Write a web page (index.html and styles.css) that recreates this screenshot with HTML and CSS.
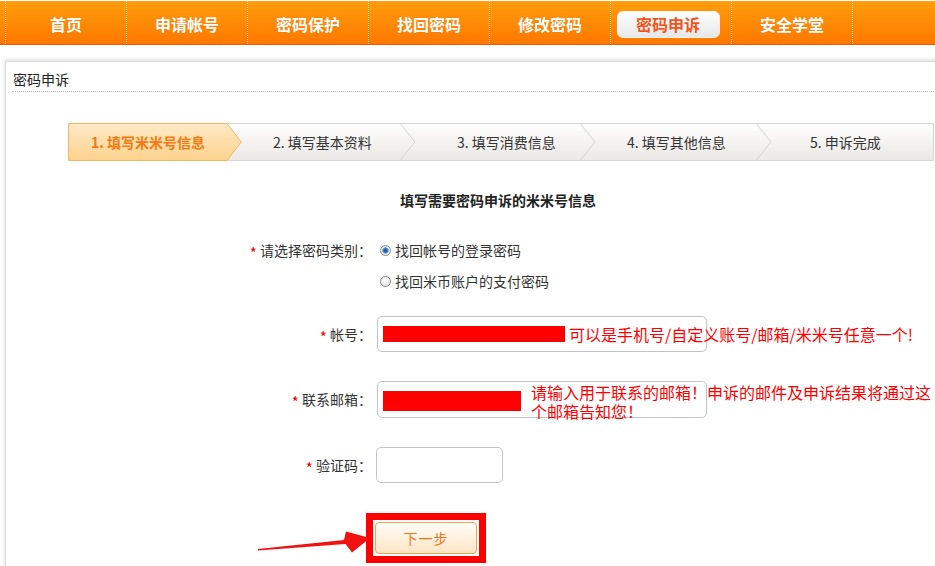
FILE: index.html
```
<!DOCTYPE html>
<html lang="zh-CN">
<head>
<meta charset="utf-8">
<title>密码申诉</title>
<link rel="stylesheet" href="styles.css">
</head>
<body>
<div class="page">
  <nav class="nav">
    <a class="nav-item" href="#">首页</a>
    <a class="nav-item" href="#">申请帐号</a>
    <a class="nav-item" href="#">密码保护</a>
    <a class="nav-item" href="#">找回密码</a>
    <a class="nav-item" href="#">修改密码</a>
    <a class="nav-item active" href="#"><span class="pill">密码申诉</span></a>
    <a class="nav-item last" href="#">安全学堂</a>
  </nav>

  <div class="panel">
    <div class="panel-title">密码申诉</div>

    <div class="steps">
      <div class="step step-1">1. 填写米米号信息</div>
      <svg class="sep-active" width="15" height="38" viewBox="0 0 15 38">
        <defs>
          <linearGradient id="og" x1="0" y1="0" x2="0" y2="1">
            <stop offset="0" stop-color="#fee9c6"/>
            <stop offset="1" stop-color="#fdd38e"/>
          </linearGradient>
        </defs>
        <polygon points="0,0 14.5,19 0,38" fill="url(#og)"/>
        <polyline points="0,0.5 14.3,19 0,37.5" fill="none" stroke="#f1b766" stroke-width="1"/>
      </svg>
      <div class="step step-2">2. 填写基本资料</div>
      <svg class="sep" width="16" height="36" viewBox="0 0 16 36">
        <polyline points="0.5,0 15,18 0.5,36" fill="none" stroke="#d3d3d3" stroke-width="1"/>
      </svg>
      <div class="step step-3">3. 填写消费信息</div>
      <svg class="sep" width="16" height="36" viewBox="0 0 16 36">
        <polyline points="0.5,0 15,18 0.5,36" fill="none" stroke="#d3d3d3" stroke-width="1"/>
      </svg>
      <div class="step step-4">4. 填写其他信息</div>
      <svg class="sep" width="16" height="36" viewBox="0 0 16 36">
        <polyline points="0.5,0 15,18 0.5,36" fill="none" stroke="#d3d3d3" stroke-width="1"/>
      </svg>
      <div class="step step-5">5. 申诉完成</div>
    </div>

    <h2 class="form-title">填写需要密码申诉的米米号信息</h2>

    <div class="form">
      <div class="row row-type">
        <div class="label"><span class="req">*</span> 请选择密码类别：</div>
        <div class="control">
          <label class="opt"><input type="radio" name="t" checked><span>找回帐号的登录密码</span></label>
        </div>
      </div>
      <div class="row row-type2">
        <div class="label"></div>
        <div class="control">
          <label class="opt"><input type="radio" name="t"><span>找回米币账户的支付密码</span></label>
        </div>
      </div>

      <div class="row row-account">
        <div class="label lh36"><span class="req">*</span> 帐号：</div>
        <div class="control">
          <div class="field field-wide"><span class="redact redact-account"></span></div>
          <span class="hint hint-account">可以是手机号/自定义账号/邮箱/米米号任意一个!</span>
        </div>
      </div>

      <div class="row row-email">
        <div class="label lh37"><span class="req">*</span> 联系邮箱：</div>
        <div class="control">
          <div class="field field-wide field-37"><span class="redact redact-email"></span></div>
          <span class="hint hint-email">请输入用于联系的邮箱！申诉的邮件及申诉结果将通过这个邮箱告知您！</span>
        </div>
      </div>

      <div class="row row-code">
        <div class="label lh36"><span class="req">*</span> 验证码：</div>
        <div class="control">
          <div class="field field-code"></div>
        </div>
      </div>

      <div class="row row-submit">
        <div class="label"></div>
        <div class="control">
          <div class="highlight"><button class="btn" type="button">下一步</button></div>
        </div>
      </div>
    </div>
  </div>

  <svg class="arrow" width="120" height="28" viewBox="0 0 120 28">
    <polygon points="3,21 89,12 91,3.5 115,10 97,24.5 90.5,16 3,22.6" fill="#f21010"/>
  </svg>
</div>
</body>
</html>
```

FILE: styles.css
```
html, body {
  margin: 0;
  padding: 0;
  overflow: hidden;
  background: #fff;
  font-family: "Noto Sans CJK SC", "Noto Sans", "Liberation Sans", sans-serif;
}

.page {
  position: relative;
  width: 935px;
  height: 566px;
  overflow: hidden;
}

/* ---------- top navigation ---------- */
.nav {
  display: flex;
  margin-top: 1px;
  height: 43px;
  padding-left: 5px;
  border-bottom: 1px solid #e25c00;
  background: linear-gradient(#ff9d0c, #ff7800);
}

.nav-item {
  width: 121px;
  flex: none;
  box-sizing: border-box;
  border-left: 1px dotted rgba(255, 255, 255, 0.6);
  display: flex;
  align-items: center;
  justify-content: center;
  padding-top: 3px;
  color: #fff;
  font-size: 16px;
  font-weight: bold;
  text-decoration: none;
  text-shadow: 0 0 1px rgba(190, 70, 0, 0.35);
}

.nav-item.last {
  width: 122px;
  border-right: 1px dotted rgba(255, 255, 255, 0.6);
}

.pill {
  width: 103px;
  height: 27px;
  box-sizing: border-box;
  display: flex;
  align-items: center;
  justify-content: center;
  margin-left: -6px;
  border-radius: 6px;
  border: 1px solid #f4f4f4;
  background: linear-gradient(#ffffff, #e7e7e7);
  color: #f0561c;
  text-shadow: none;
}

/* ---------- panel ---------- */
.panel {
  margin: 16px 0 0 5px;
  width: 940px;
  height: 600px;
  border: 1px solid #dddddd;
  box-shadow: 0 -1px 4px rgba(0, 0, 0, 0.16);
  background: #fff;
}

.panel-title {
  margin-left: 6px;
  padding: 7px 0 2px 1px;
  line-height: 20px;
  font-size: 14px;
  color: #222;
  border-bottom: 1px dotted #b8b8b8;
}

/* ---------- steps ---------- */
.steps {
  display: flex;
  margin: 31px 0 0 62px;
  width: 866px;
  height: 38px;
  box-sizing: border-box;
  border: 1px solid #d6d6d6;
  border-left: none;
  background: linear-gradient(#fefefe, #ebe8e5);
}

.step {
  flex: none;
  height: 36px;
  line-height: 36px;
  box-sizing: border-box;
  font-size: 14px;
  color: #333;
  white-space: nowrap;
}

.step-1 {
  width: 159px;
  height: 38px;
  margin: -1px 0;
  padding-left: 22px;
  border: 1px solid #f1b766;
  border-right: none;
  border-radius: 3px 0 0 3px;
  background: linear-gradient(#fee9c6, #fdd38e);
  color: #f47a10;
  font-weight: bold;
}

.sep-active {
  display: block;
  flex: none;
  margin: -1px 0;
}

.sep {
  display: block;
  flex: none;
}

.step-2 { width: 158px; padding-left: 31px; }
.step-3 { width: 164px; padding-left: 41px; }
.step-4 { width: 160px; padding-left: 31px; }
.step-5 { flex: 1; padding-left: 38px; }

/* ---------- form ---------- */
.form-title {
  margin: 29px 0 0 0;
  padding-left: 394px;
  line-height: 20px;
  font-size: 14px;
  font-weight: bold;
  color: #222;
}

.row {
  display: flex;
  align-items: flex-start;
}

.label {
  width: 366px;
  flex: none;
  text-align: right;
  font-size: 14px;
  line-height: 20px;
  color: #333;
  white-space: nowrap;
}

.lh36 { line-height: 36px; height: 36px; }
.lh37 { line-height: 37px; height: 37px; }

.req {
  color: #e60000;
  font-size: 15px;
  line-height: 0;
  vertical-align: -3px;
}

.control {
  margin-left: 5px;
  display: flex;
  align-items: flex-start;
}

.row-type { margin-top: 30px; }
.row-type2 { margin-top: 11px; }
.row-account { margin-top: 25px; }
.row-email { margin-top: 29px; }
.row-code { margin-top: 26px; }
.row-submit { margin-top: 30px; }

.row-type .label { height: 20px; }

.opt {
  display: flex;
  align-items: center;
  line-height: 20px;
  font-size: 14px;
  color: #333;
}

.opt input {
  -webkit-appearance: none;
  appearance: none;
  box-sizing: border-box;
  width: 11px;
  height: 11px;
  margin: 0 4px 0 3px;
  border: 1px solid #8e8e8e;
  border-radius: 50%;
  background: radial-gradient(circle at 45% 40%, #ffffff 0, #f0f0f0 40%, #d2d2d2 100%);
}

.opt input:checked {
  background: radial-gradient(circle at 50% 50%, #174f8e 0, #2f78bb 2px, #6fa4d4 2.8px, #f2f2f2 3.6px, #d6d6d6 100%);
}

.field {
  box-sizing: border-box;
  height: 36px;
  border: 1px solid #c4c4c4;
  border-radius: 5px;
  background: #fff;
  padding: 0 5px;
  display: flex;
  align-items: center;
  flex: none;
}

.field-wide { width: 330px; }
.field-37 { height: 37px; }
.field-code { width: 127px; margin-left: -1px; }

.redact {
  display: block;
  background: #ff0000;
}

.redact-account { width: 182px; height: 16px; }
.redact-email { width: 138px; height: 20px; margin-top: 3px; }

.hint {
  color: #ff0000;
  font-size: 16px;
}

.hint-account {
  margin-left: -138px;
  line-height: 36px;
  white-space: nowrap;
}

.hint-email {
  margin-left: -176px;
  margin-top: 2px;
  width: 404px;
  line-height: 19px;
}

.highlight {
  margin-left: -11px;
  border: 7px solid #ff0000;
  padding: 2px;
  background: #fff;
}

.btn {
  display: block;
  width: 102px;
  height: 32px;
  margin: 0;
  padding: 0;
  border: 1px solid #f6a34e;
  border-radius: 4px;
  background: linear-gradient(#fffdf9, #fde5c4);
  color: #f2741e;
  font-family: "Noto Sans CJK SC", "Noto Sans", sans-serif;
  font-size: 14px;
  letter-spacing: 1px;
  cursor: pointer;
}

/* annotation arrow drawn over the page */
.arrow {
  position: absolute;
  left: 255px;
  top: 528px;
}
```
